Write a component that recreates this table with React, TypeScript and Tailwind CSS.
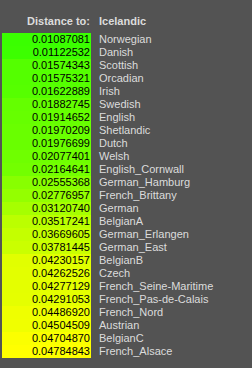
import React from 'react';

interface Row {
  value: number;
  name: string;
}

const rows: Row[] = [
  { value: 0.01087081, name: 'Norwegian' },
  { value: 0.01122532, name: 'Danish' },
  { value: 0.01574343, name: 'Scottish' },
  { value: 0.01575321, name: 'Orcadian' },
  { value: 0.01622889, name: 'Irish' },
  { value: 0.01882745, name: 'Swedish' },
  { value: 0.01914652, name: 'English' },
  { value: 0.01970209, name: 'Shetlandic' },
  { value: 0.01976699, name: 'Dutch' },
  { value: 0.02077401, name: 'Welsh' },
  { value: 0.02164641, name: 'English_Cornwall' },
  { value: 0.02555368, name: 'German_Hamburg' },
  { value: 0.02776957, name: 'French_Brittany' },
  { value: 0.0312074, name: 'German' },
  { value: 0.03517241, name: 'BelgianA' },
  { value: 0.03669605, name: 'German_Erlangen' },
  { value: 0.03781445, name: 'German_East' },
  { value: 0.04230157, name: 'BelgianB' },
  { value: 0.04262526, name: 'Czech' },
  { value: 0.04277129, name: 'French_Seine-Maritime' },
  { value: 0.04291053, name: 'French_Pas-de-Calais' },
  { value: 0.0448692, name: 'French_Nord' },
  { value: 0.04504509, name: 'Austrian' },
  { value: 0.0470487, name: 'BelgianC' },
  { value: 0.04784843, name: 'French_Alsace' },
];

const maxValue = Math.max(...rows.map((r) => r.value));

// red channel grows with distance: green for close, yellow for far
const cellColor = (v: number) => `rgb(${Math.round((v / maxValue) * 255)}, 255, 0)`;

export default function App() {
  return (
    <div className="w-[252px] h-[368px] bg-[#535353] pl-[2px] pt-[15px] font-['Liberation_Sans',Arial,sans-serif] text-[11px] leading-[13px]">
      <div className="flex h-[13px] font-bold text-[#dcdcdc]">
        <div className="w-[89px] text-right pr-[1px]">Distance to:</div>
        <div className="pl-[8px]">Icelandic</div>
      </div>
      <div className="mt-[5px] flex flex-col">
        {rows.map((row) => (
          <div key={row.name} className="flex h-[13px]">
            <div
              className="w-[89px] text-right pr-[1px] text-black"
              style={{ backgroundColor: cellColor(row.value) }}
            >
              {row.value.toFixed(8)}
            </div>
            <div className="pl-[8px] text-[#dcdcdc] whitespace-nowrap">{row.name}</div>
          </div>
        ))}
      </div>
    </div>
  );
}
